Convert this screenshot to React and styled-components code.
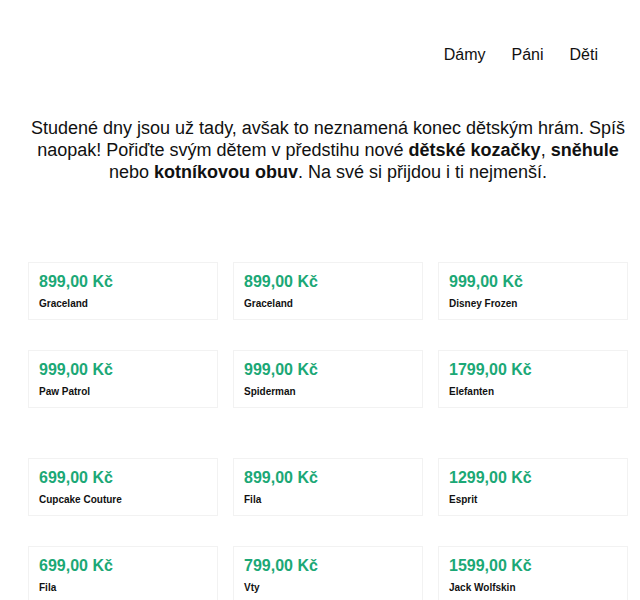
import React from 'react';
import styled, { createGlobalStyle } from 'styled-components';

const GlobalStyle = createGlobalStyle`
  body {
    margin: 0;
    background: #fff;
    font-family: "Liberation Sans", Arial, sans-serif;
    color: #111;
  }
`;

const Page = styled.div`
  width: 640px;
  padding-bottom: 40px;
`;

const Nav = styled.nav`
  display: flex;
  justify-content: flex-end;
  gap: 26px;
  padding: 45px 42px 0 0;
`;

const NavLink = styled.a`
  font-size: 16px;
  line-height: 20px;
  color: #111;
  text-decoration: none;
  cursor: pointer;
`;

const Intro = styled.p`
  margin: 52px 12px 0 28px;
  font-size: 18px;
  line-height: 22px;
  text-align: center;
  color: #111;

  b {
    font-weight: 700;
  }
`;

const Groups = styled.div`
  display: flex;
  flex-direction: column;
  gap: 50px;
  margin-top: 79px;
  padding-left: 28px;
`;

const Grid = styled.div`
  display: grid;
  grid-template-columns: repeat(3, 190px);
  column-gap: 15px;
  row-gap: 30px;
`;

const Card = styled.div`
  box-sizing: border-box;
  height: 58px;
  padding: 9px 10px 8px;
  border: 1px solid #f2f2f2;
  background: #fff;
`;

const Price = styled.div`
  font-size: 16px;
  line-height: 20px;
  font-weight: 700;
  color: #1ba876;
  margin-bottom: 5px;
`;

const Brand = styled.div`
  font-size: 10px;
  line-height: 14px;
  font-weight: 700;
  color: #111;
`;

const groups = [
  [
    { price: '899,00 Kč', brand: 'Graceland' },
    { price: '899,00 Kč', brand: 'Graceland' },
    { price: '999,00 Kč', brand: 'Disney Frozen' },
    { price: '999,00 Kč', brand: 'Paw Patrol' },
    { price: '999,00 Kč', brand: 'Spiderman' },
    { price: '1799,00 Kč', brand: 'Elefanten' },
  ],
  [
    { price: '699,00 Kč', brand: 'Cupcake Couture' },
    { price: '899,00 Kč', brand: 'Fila' },
    { price: '1299,00 Kč', brand: 'Esprit' },
    { price: '699,00 Kč', brand: 'Fila' },
    { price: '799,00 Kč', brand: 'Vty' },
    { price: '1599,00 Kč', brand: 'Jack Wolfskin' },
  ],
];

export default function App() {
  return (
    <Page>
      <GlobalStyle />
      <Nav>
        <NavLink>Dámy</NavLink>
        <NavLink>Páni</NavLink>
        <NavLink>Děti</NavLink>
      </Nav>

      <Intro>
        Studené dny jsou už tady, avšak to neznamená konec dětským hrám. Spíš naopak! Pořiďte
        svým dětem v předstihu nové <b>dětské kozačky</b>, <b>sněhule</b> nebo{' '}
        <b>kotníkovou obuv</b>. Na své si přijdou i ti nejmenší.
      </Intro>

      <Groups>
        {groups.map((items, g) => (
          <Grid key={g}>
            {items.map((item, i) => (
              <Card key={i}>
                <Price>{item.price}</Price>
                <Brand>{item.brand}</Brand>
              </Card>
            ))}
          </Grid>
        ))}
      </Groups>
    </Page>
  );
}
